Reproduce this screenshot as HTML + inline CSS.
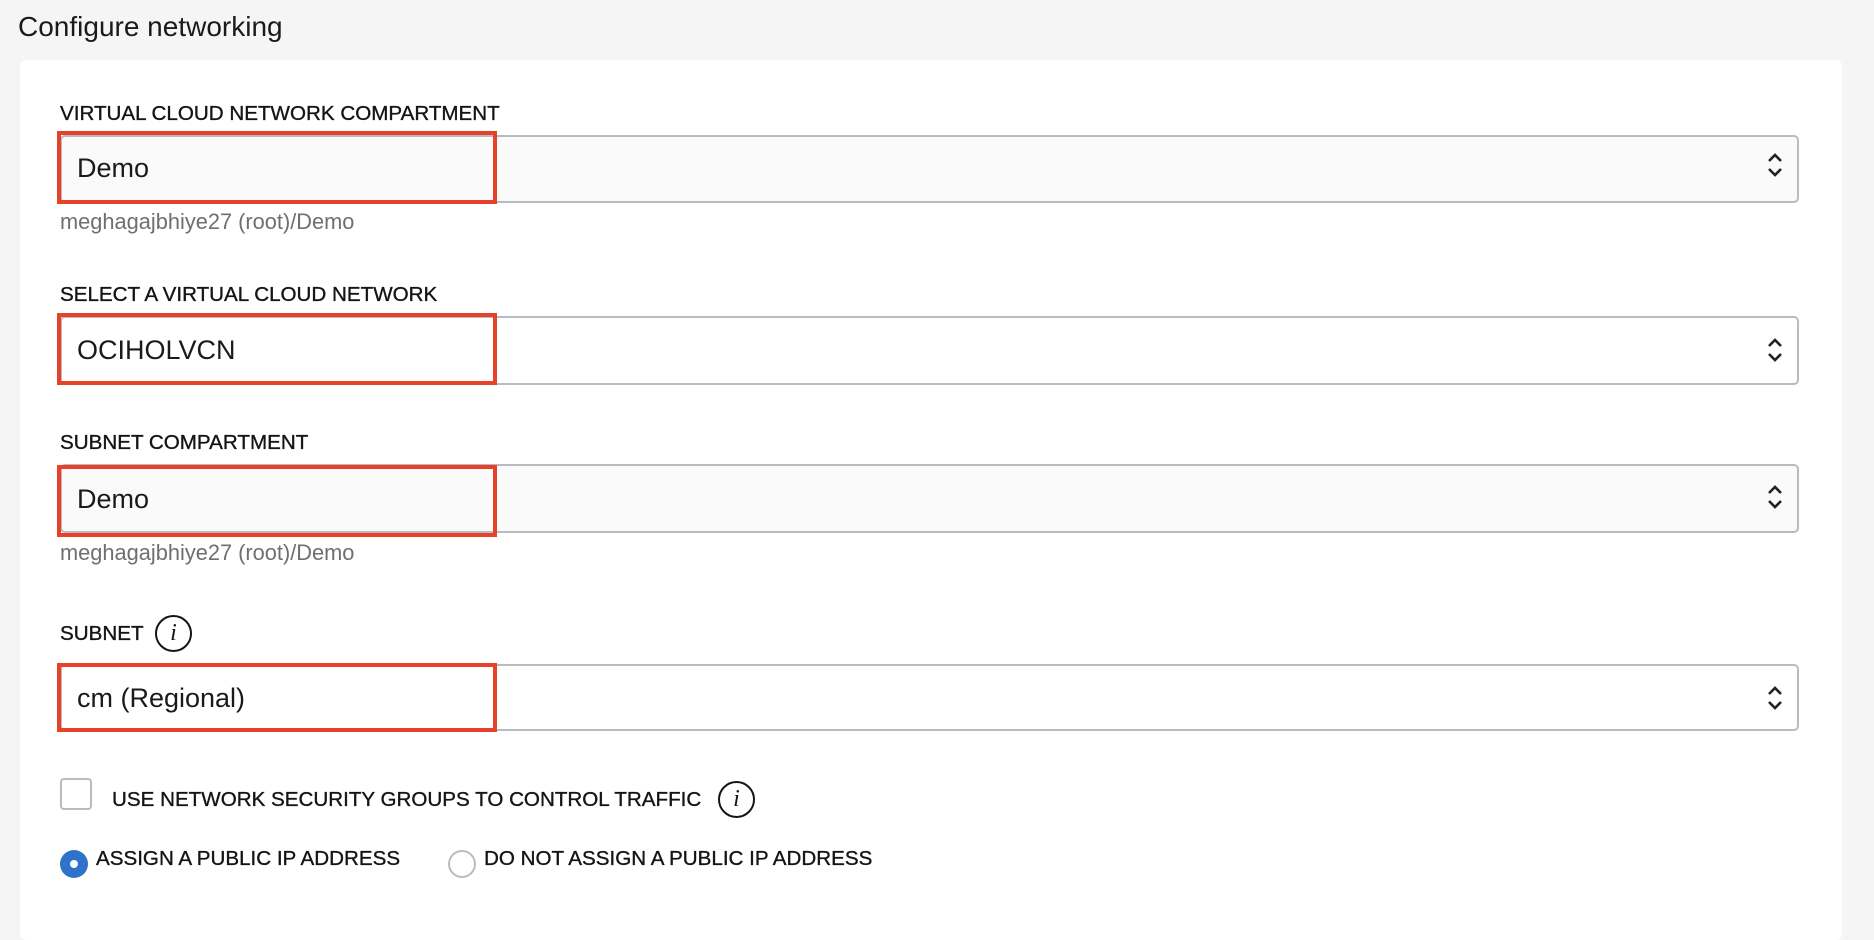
<!DOCTYPE html>
<html><head><meta charset="utf-8"><style>
*{margin:0;padding:0;box-sizing:border-box}
body{width:1874px;height:914px;background:#f5f5f5;font-family:"Liberation Sans",Arial,sans-serif;position:relative;overflow:hidden;color:#161513}
.t{position:absolute;left:18px;top:11px;font-size:28px;color:#1a1a1a}
.card{position:absolute;left:20px;top:60px;width:1822px;height:880px;background:#fff;border-radius:6px}
.lbl{position:absolute;left:60px;font-size:20.6px;line-height:22px;color:#161513;-webkit-text-stroke:0.35px #161513}
.sel{position:absolute;left:60px;width:1739px;background:#fafafa;border:2px solid #b8bcc2;border-radius:5px}
.red{position:absolute;left:57px;width:440px;border:4px solid #e8412a}
.val{position:absolute;left:77px;font-size:27px;color:#1a1a1a}
.arr{position:absolute;left:1766px}
.help{position:absolute;left:60px;font-size:21.8px;color:#6f6f6f}
.info{position:absolute;width:37px;height:37px;border:2px solid #161513;border-radius:50%;font-family:"Liberation Serif",serif;font-style:italic;font-size:24px;text-align:center;line-height:33px}
</style></head><body>
<div class="t">Configure networking</div>
<div class="card"></div>

<div class="lbl" style="top:103px">VIRTUAL CLOUD NETWORK COMPARTMENT</div>
<div class="sel" style="top:135px;height:68px"></div>
<div class="red" style="top:131px;height:73px"></div>
<div class="val" style="top:153px">Demo</div>
<svg class="arr" style="top:150px" width="18" height="30"><path d="M3 11 L9 5 L15 11 M3 19 L9 25 L15 19" fill="none" stroke="#222" stroke-width="2.6"/></svg>
<div class="help" style="top:209px">meghagajbhiye27 (root)/Demo</div>

<div class="lbl" style="top:284px">SELECT A VIRTUAL CLOUD NETWORK</div>
<div class="sel" style="top:316px;height:69px;background:#fff"></div>
<div class="red" style="top:313px;height:72px"></div>
<div class="val" style="top:335px">OCIHOLVCN</div>
<svg class="arr" style="top:335px" width="18" height="30"><path d="M3 11 L9 5 L15 11 M3 19 L9 25 L15 19" fill="none" stroke="#222" stroke-width="2.6"/></svg>

<div class="lbl" style="top:432px">SUBNET COMPARTMENT</div>
<div class="sel" style="top:464px;height:69px"></div>
<div class="red" style="top:465px;height:72px"></div>
<div class="val" style="top:484px">Demo</div>
<svg class="arr" style="top:482px" width="18" height="30"><path d="M3 11 L9 5 L15 11 M3 19 L9 25 L15 19" fill="none" stroke="#222" stroke-width="2.6"/></svg>
<div class="help" style="top:540px">meghagajbhiye27 (root)/Demo</div>

<div class="lbl" style="top:623px">SUBNET</div>
<div class="info" style="left:155px;top:615px">i</div>
<div class="sel" style="top:664px;height:67px;background:#fff"></div>
<div class="red" style="top:663px;height:69px"></div>
<div class="val" style="top:683px">cm (Regional)</div>
<svg class="arr" style="top:683px" width="18" height="30"><path d="M3 11 L9 5 L15 11 M3 19 L9 25 L15 19" fill="none" stroke="#222" stroke-width="2.6"/></svg>

<div style="position:absolute;left:60px;top:778px;width:32px;height:32px;border:2px solid #b8bcc2;border-radius:4px"></div>
<div class="lbl" style="left:112px;top:789px">USE NETWORK SECURITY GROUPS TO CONTROL TRAFFIC</div>
<div class="info" style="left:718px;top:781px">i</div>

<div style="position:absolute;left:60px;top:850px;width:28px;height:28px;border-radius:50%;background:#2f73c9"><div style="position:absolute;left:10px;top:10px;width:8px;height:8px;border-radius:50%;background:#fff"></div></div>
<div class="lbl" style="left:96px;top:848px">ASSIGN A PUBLIC IP ADDRESS</div>
<div style="position:absolute;left:448px;top:850px;width:28px;height:28px;border-radius:50%;border:2px solid #b8bcc2;background:#fff"></div>
<div class="lbl" style="left:484px;top:848px">DO NOT ASSIGN A PUBLIC IP ADDRESS</div>
</body></html>
